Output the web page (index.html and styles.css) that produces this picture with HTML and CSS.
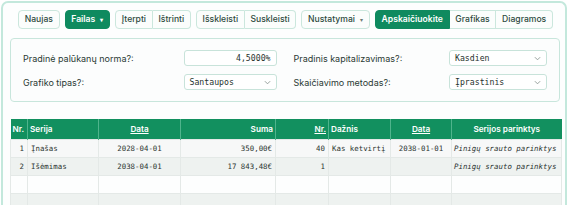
FILE: index.html
```html
<!DOCTYPE html>
<html lang="lt">
<head>
<meta charset="utf-8">
<link rel="stylesheet" href="styles.css">
</head>
<body>
<div class="app">
  <div class="toolbar">
    <button class="btn">Naujas</button>
    <button class="btn primary">Failas <span class="caret">▾</span></button>
    <div class="group">
      <button class="btn">Įterpti</button><button class="btn">Ištrinti</button>
    </div>
    <div class="group">
      <button class="btn">Išskleisti</button><button class="btn">Suskleisti</button>
    </div>
    <button class="btn">Nustatymai <span class="caret grey">▾</span></button>
    <div class="group">
      <button class="btn primary">Apskaičiuokite</button><button class="btn">Grafikas</button><button class="btn">Diagramos</button>
    </div>
  </div>

  <div class="panel">
    <div class="col">
      <label class="lbl">Pradinė palūkanų norma?:</label>
      <div class="ctl input">4,5000%</div>
      <label class="lbl">Grafiko tipas?:</label>
      <div class="ctl select">Santaupos<svg class="chev" viewBox="0 0 8 5"><path d="M1 1l3 3 3-3" fill="none" stroke="#8a9590" stroke-width="1"/></svg></div>
    </div>
    <div class="col right">
      <label class="lbl">Pradinis kapitalizavimas?:</label>
      <div class="ctl select">Kasdien<svg class="chev" viewBox="0 0 8 5"><path d="M1 1l3 3 3-3" fill="none" stroke="#8a9590" stroke-width="1"/></svg></div>
      <label class="lbl">Skaičiavimo metodas?:</label>
      <div class="ctl select">Įprastinis<svg class="chev" viewBox="0 0 8 5"><path d="M1 1l3 3 3-3" fill="none" stroke="#8a9590" stroke-width="1"/></svg></div>
    </div>
  </div>

  <table class="grid">
    <colgroup>
      <col class="w17"><col class="w71"><col class="w82"><col class="w95"><col class="w53"><col class="w62"><col class="w61"><col class="w110">
    </colgroup>
    <thead>
      <tr>
        <th class="l">Nr.</th>
        <th class="l">Serija</th>
        <th class="c"><u>Data</u></th>
        <th class="r">Suma</th>
        <th class="r"><u>Nr.</u></th>
        <th class="l">Dažnis</th>
        <th class="c"><u>Data</u></th>
        <th class="c">Serijos parinktys</th>
      </tr>
    </thead>
    <tbody>
      <tr>
        <td class="r">1</td><td>Įnašas</td><td class="c">2028-04-01</td><td class="r">350,00€</td><td class="r">40</td><td class="clip">Kas ketvirtį</td><td class="c">2038-01-01</td><td class="it">Pinigų srauto parinktys</td>
      </tr>
      <tr>
        <td class="r">2</td><td>Išėmimas</td><td class="c">2038-04-01</td><td class="r">17 843,48€</td><td class="r">1</td><td></td><td></td><td class="it">Pinigų srauto parinktys</td>
      </tr>
      <tr><td></td><td></td><td></td><td></td><td></td><td></td><td></td><td></td></tr>
      <tr><td></td><td></td><td></td><td></td><td></td><td></td><td></td><td></td></tr>
    </tbody>
  </table>
</div>
</body>
</html>
```

FILE: styles.css
```css
* { box-sizing: border-box; }
html, body { margin: 0; padding: 0; background: #ffffff; height: 205px; overflow: hidden; }
body {
  font-family: Inter, "Noto Sans", sans-serif;
  font-size: 9px;
  color: #26352f;
}
.app {
  margin: 1px 3px 0 1px;
  border: 2px solid #c3e8dc;
  border-bottom: none;
  border-radius: 7px 7px 0 0;
  padding: 7px 4px 0 7px;
  height: 204px;
  overflow: hidden;
  background: #fdfefe;
}
.toolbar {
  display: flex;
  gap: 5px;
  padding-left: 8px;
  height: 19px;
}
.btn {
  font-family: inherit;
  font-size: 8.6px;
  font-weight: 500;
  color: #2e4a40;
  background: #fbfdfc;
  border: 1px solid #cbe7dd;
  border-radius: 4px;
  height: 19px;
  padding: 0 5.7px;
  margin: 0;
  line-height: 17px;
  white-space: nowrap;
}
.btn.primary {
  background: #0f8a5f;
  border-color: #0f8a5f;
  color: #ffffff;
  font-weight: 600;
}
.caret { font-size: 6px; margin-left: 3px; }
.caret.grey { color: #6b7a74; }
.group { display: flex; }
.group .btn { border-radius: 0; }
.group .btn + .btn { border-left: none; }
.group .btn:first-child { border-radius: 4px 0 0 4px; }
.group .btn:last-child { border-radius: 0 4px 4px 0; }

.panel {
  margin-top: 9px;
  width: 550px;
  height: 64px;
  border: 1px solid #c8e6dc;
  border-radius: 4px;
  background: #fcfdfd;
  padding: 11px 12px;
  display: flex;
  gap: 17px;
}
.col {
  flex: 1;
  display: grid;
  grid-template-columns: 1fr 93px;
  row-gap: 8px;
  align-items: center;
}
.col.right { grid-template-columns: 1fr 98px; }
.lbl { color: #2a3a34; font-size: 9px; }
.ctl {
  height: 16px;
  border: 1px solid #c8e3da;
  border-radius: 3px;
  background: #ffffff;
  font-family: "DejaVu Sans Mono", monospace;
  font-size: 8.2px;
  color: #27332e;
  display: flex;
  align-items: center;
  padding: 0 5px;
}
.input { justify-content: flex-end; }
.select { justify-content: space-between; }
.chev { width: 7px; height: 5px; }

.grid {
  margin-top: 17px;
  width: 551px;
  border-collapse: collapse;
  table-layout: fixed;
  font-family: "DejaVu Sans Mono", monospace;
  font-size: 7.4px;
  color: #2b3430;
}
.w17 { width: 17px; } .w71 { width: 71px; } .w82 { width: 82px; } .w95 { width: 95px; }
.w53 { width: 53px; } .w62 { width: 62px; } .w61 { width: 61px; } .w110 { width: 110px; }
th {
  background: #12905f;
  color: #ffffff;
  font-family: Inter, "Noto Sans", sans-serif;
  font-size: 8.2px;
  font-weight: 600;
  height: 20px;
  padding: 0 2px;
  border-left: 1px solid #4fb48c;
  white-space: nowrap;
  overflow: hidden;
}
th:first-child { border-left: none; }
th u { text-decoration-thickness: 1px; text-underline-offset: 1px; }
td {
  height: 18px;
  padding: 0 3px;
  border: 1px solid #e4e9e7;
  white-space: nowrap;
  overflow: hidden;
}
tbody tr:nth-child(odd) td { background: #f7f8f8; }
tbody tr:nth-child(even) td { background: #eef2f0; }
tbody tr:nth-child(3) td { background: #fdfefe; }
.l { text-align: left; }
.c { text-align: center; }
.r { text-align: right; }
.it { font-style: italic; padding-left: 2px; }
.clip { text-overflow: clip; }
```
